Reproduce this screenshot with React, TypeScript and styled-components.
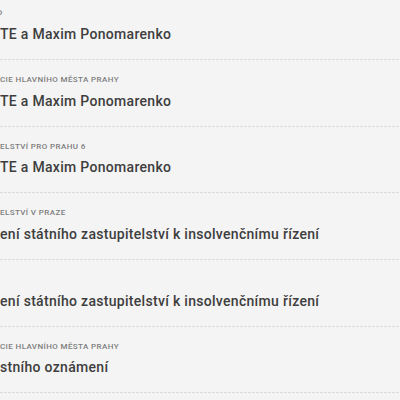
import React from "react";
import styled, { createGlobalStyle } from "styled-components";

const Global = createGlobalStyle`
  html, body { margin: 0; padding: 0; background: #f4f4f4; }
  body { font-family: Roboto, "Noto Sans", sans-serif; overflow: hidden; }
`;

const Page = styled.div`
  width: 400px;
  height: 400px;
  overflow: hidden;
  background: #f4f4f4;
`;

const List = styled.ul`
  list-style: none;
  margin: -6.7px 0 0 0;
  padding: 0;
`;

const Item = styled.li`
  display: flex;
  flex-direction: column;
  gap: 4.5px;
  padding: 14px 0 16.2px;
  white-space: nowrap;
  background: repeating-linear-gradient(
      to right,
      #dcdcdc 0 3px,
      transparent 3px 4px
    )
    left bottom / 100% 1px no-repeat;
`;

const Label = styled.div<{ $indent?: number }>`
  font-size: 8px;
  line-height: 12px;
  height: 12px;
  font-weight: 500;
  text-transform: uppercase;
  color: #7d7d7d;
  letter-spacing: 0.4px;
  text-indent: ${(p) => p.$indent ?? 0}px;
`;

const Title = styled.a`
  display: block;
  font-size: 14px;
  line-height: 20px;
  font-weight: 500;
  color: #3e3e3e;
  letter-spacing: 0.3px;
  text-decoration: none;
`;

const items = [
  { label: "D", indent: -3, title: "TE a Maxim Ponomarenko" },
  { label: "CIE HLAVNÍHO MĚSTA PRAHY", title: "TE a Maxim Ponomarenko" },
  { label: "ELSTVÍ PRO PRAHU 6", title: "TE a Maxim Ponomarenko" },
  { label: "ELSTVÍ V PRAZE", title: "ení státního zastupitelství k insolvenčnímu řízení" },
  { label: "", title: "ení státního zastupitelství k insolvenčnímu řízení" },
  { label: "CIE HLAVNÍHO MĚSTA PRAHY", title: "stního oznámení" },
];

export default function App() {
  return (
    <Page>
      <Global />
      <List>
        {items.map((it, i) => (
          <Item key={i}>
            <Label $indent={it.indent}>{it.label}</Label>
            <Title href="#">{it.title}</Title>
          </Item>
        ))}
      </List>
    </Page>
  );
}
